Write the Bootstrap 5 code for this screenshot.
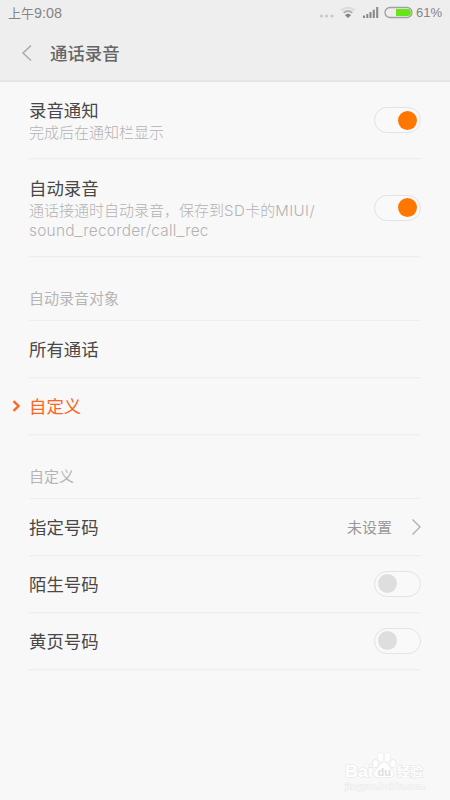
<!DOCTYPE html>
<html lang="zh-CN">
<head>
<meta charset="utf-8">
<meta name="viewport" content="width=device-width, initial-scale=1">
<title>通话录音</title>
<link href="https://cdn.jsdelivr.net/npm/bootstrap@5.3.0/dist/css/bootstrap.min.css" rel="stylesheet">
<style>
body{background:#f8f8f8;color:#484848;font-family:"Liberation Sans","Noto Sans CJK SC",sans-serif;height:800px;overflow:hidden}
.top-area{background:#eee;height:82px;border-bottom:2px solid #e6e6e6}
.status-line{height:26px;padding:0 8px;font-size:13px;line-height:26px;color:#858585}
.digits{font-size:14.3px}
.title-line{height:55px;padding-left:21px}
.title-line svg{margin-top:-1px}
.title-line h1{font-size:17.4px;line-height:26px;font-weight:500;color:#666;margin:1px 0 0 17px}
.settings{margin:0 29px}
.item{height:57px;border-bottom:1px solid #eee;font-size:17.4px;line-height:24px;box-shadow:0 1px #f5f5f5;padding-top:1px}
.item-notice{height:77px;padding-top:2px}
.item-auto{height:98px;padding-top:2px}
.caption{height:64px;border-bottom:1px solid #eee;font-size:15px;line-height:20px;color:#b5b5b5;padding-top:32px}
.desc{font-size:15px;line-height:20px;color:#b3b3b3;font-family:Inter,"Noto Sans CJK SC",sans-serif;font-weight:300;white-space:nowrap}
.latin{letter-spacing:.45px}
.path{font-size:15.4px;letter-spacing:.25px}
.path i{font-style:normal;display:inline-block;transform:scaleX(1.2);margin:0 .7px}
.picked{color:#ff6420}
.picked svg{margin:-2px 8px 0 -17px}
.value{font-size:15px;color:#999}
.go{margin:-2px 0 0 16px}
.switch{width:47px;height:26px;border:1px solid #e3e3e3;border-radius:13px;padding:0 3px;background:#f9f9f9;margin-top:-2px}
.knob{width:19px;height:19px;border-radius:50%;background:#dedede}
.switch.on .knob{background:#ff7600}
.watermark{right:24px;bottom:7px;width:82px;height:42px}
</style>
<script src="https://cdn.jsdelivr.net/npm/bootstrap@5.3.0/dist/js/bootstrap.bundle.min.js"></script>
</head>
<body class="position-relative">
<header class="top-area">
  <div class="status-line d-flex align-items-center justify-content-between">
    <span class="clock">上午<span class="digits">9:08</span></span>
    <div class="d-flex align-items-center">
      <svg width="94" height="26" viewBox="318 0 94 26" fill="none" overflow="visible">
        <g fill="#c8c8c8"><circle cx="321.5" cy="16" r="1.6"/><circle cx="326.7" cy="16" r="1.6"/><circle cx="332" cy="16" r="1.6"/></g>
        <path d="M341.3 10.4Q348 5 354.7 10.4" stroke="#dadada" stroke-width="2"/>
        <path d="M343.6 12.8Q348 9.2 352.4 12.8" stroke="#b0b0b0" stroke-width="1.8"/>
        <path d="M345 15.2Q348 12.4 351 15.2L348 18Z" fill="#858585"/>
        <path d="M364 15.5V18M367.3 14V18M370.5 12V18M373.8 9.8V18M377.2 7V18" stroke="#8a8a8a" stroke-width="2.1"/>
        <rect x="385" y="7.500" width="27" height="10" rx="5" stroke="#a0a0a0" stroke-width="1.3"/>
        <path d="M396 9H407.500A3.500 3.500 0 0 1 407.500 16H396Z" fill="#66e51b"/>
      </svg>
      <span class="ms-1">61%</span>
    </div>
  </div>
  <div class="title-line d-flex align-items-center">
    <svg width="12" height="18" viewBox="0 0 12 18" fill="none" stroke="#aaa" stroke-width="1.5"><path d="M10 1.500 2 9l8 7.500"/></svg>
    <h1>通话录音</h1>
  </div>
</header>
<main class="settings">
  <div class="item item-notice d-flex align-items-center justify-content-between">
    <div><div>录音通知</div><div class="desc">完成后在通知栏显示</div></div>
    <div class="switch on d-flex align-items-center justify-content-end"><div class="knob"></div></div>
  </div>
  <div class="item item-auto d-flex align-items-center justify-content-between">
    <div><div>自动录音</div><div class="desc">通话接通时自动录音，保存到<span class="latin">SD</span>卡的<span class="latin">MIUI/</span><br><span class="path">sound<i>_</i>recorder/call<i>_</i>rec</span></div></div>
    <div class="switch on d-flex align-items-center justify-content-end"><div class="knob"></div></div>
  </div>
  <div class="caption">自动录音对象</div>
  <div class="item d-flex align-items-center">所有通话</div>
  <div class="item picked d-flex align-items-center"><svg width="9" height="12" viewBox="0 0 9 12" fill="none" stroke="#ff6420" stroke-width="2.4"><path d="m1.500 1.200 5 4.800-5 4.800"/></svg>自定义</div>
  <div class="caption">自定义</div>
  <div class="item d-flex align-items-center justify-content-between">
    <span>指定号码</span>
    <span class="d-flex align-items-center"><span class="value">未设置</span><svg class="go" width="13" height="18" viewBox="0 0 13 18" fill="none" stroke="#b0b0b0" stroke-width="1.400"><path d="m4.500 1.500 7.500 7.500-7.500 7.500"/></svg></span>
  </div>
  <div class="item d-flex align-items-center justify-content-between"><span>陌生号码</span><div class="switch d-flex align-items-center"><div class="knob"></div></div></div>
  <div class="item d-flex align-items-center justify-content-between"><span>黄页号码</span><div class="switch d-flex align-items-center"><div class="knob"></div></div></div>
</main>
<svg class="watermark position-absolute" viewBox="0 0 82 42" fill="#fff" stroke="#e6e6e6" stroke-width="1.200" paint-order="stroke">
  <text x="1" y="25.500" font-size="17" font-weight="bold" font-family="Liberation Sans, sans-serif" textLength="28" lengthAdjust="spacingAndGlyphs">Bai</text>
  <ellipse cx="31.500" cy="12.500" rx="2.700" ry="3.600"/><ellipse cx="36.500" cy="6" rx="3" ry="4.200"/><ellipse cx="43.500" cy="6" rx="3" ry="4.200"/><ellipse cx="49" cy="12.500" rx="2.700" ry="3.600"/>
  <path d="M40 11.500c4 0 5 5 8 7.500 4 5 0 8-4 7h-8c-5 1-8-3-4-7 3-2.500 4-7.500 8-7.500Z"/>
  <text x="33.500" y="24.500" font-size="11" font-weight="bold" font-family="Liberation Sans, sans-serif" fill="#dedede" stroke="none">du</text>
  <text x="53" y="24.500" font-size="13" font-weight="bold" font-family="Noto Sans CJK SC, sans-serif">经验</text>
  <text x="1" y="38" font-size="8.500" font-family="Liberation Serif, serif" textLength="80" lengthAdjust="spacingAndGlyphs" fill="#fbfbfb" stroke="#ebebeb" stroke-width="1">jingyan.baidu.com</text>
</svg>
</body>
</html>
